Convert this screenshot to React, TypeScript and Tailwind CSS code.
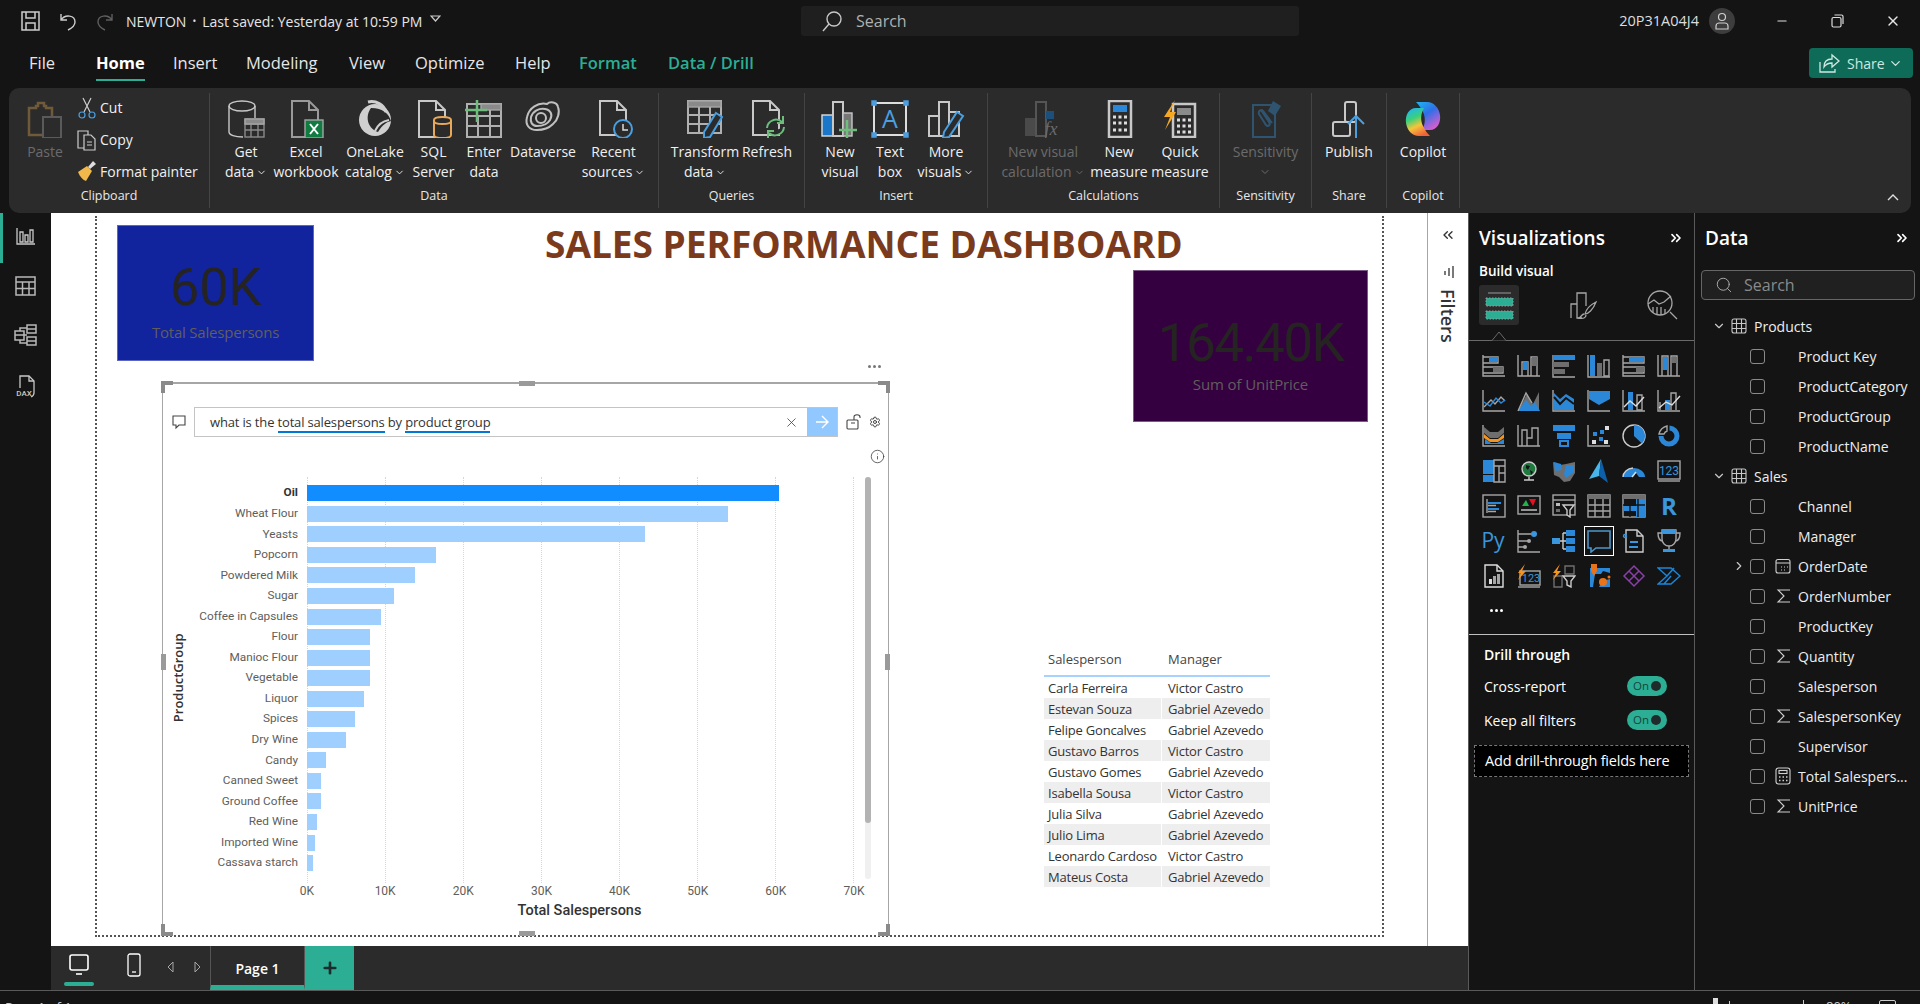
import type { ReactNode } from "react";
import { ChevronDown, ChevronRight, ChevronsLeft, ChevronsRight, Search, X, Info, Settings, Plus, Minus } from "lucide-react";

const G = "#a6a6a6";
const B = "#2b88d8";
const D = "#6e6e6e";
const O = "#f7941d";

const TABS = [
  { name: "File", w: "w-[67px]", cls: "text-[#e6e6e6]" },
  { name: "Home", w: "w-[77px]", cls: "text-white font-bold" },
  { name: "Insert", w: "w-[73px]", cls: "text-[#e6e6e6]" },
  { name: "Modeling", w: "w-[103px]", cls: "text-[#e6e6e6]" },
  { name: "View", w: "w-[66px]", cls: "text-[#e6e6e6]" },
  { name: "Optimize", w: "w-[100px]", cls: "text-[#e6e6e6]" },
  { name: "Help", w: "w-[64px]", cls: "text-[#e6e6e6]" },
  { name: "Format", w: "w-[89px]", cls: "text-[#2bae94] font-semibold" },
  { name: "Data / Drill", w: "w-[100px]", cls: "text-[#2bae94] font-semibold" },
];

const BARS = [
  { name: "Oil", w: 472 },
  { name: "Wheat Flour", w: 421 },
  { name: "Yeasts", w: 338 },
  { name: "Popcorn", w: 129 },
  { name: "Powdered Milk", w: 108 },
  { name: "Sugar", w: 87 },
  { name: "Coffee in Capsules", w: 74 },
  { name: "Flour", w: 63 },
  { name: "Manioc Flour", w: 63 },
  { name: "Vegetable", w: 63 },
  { name: "Liquor", w: 57 },
  { name: "Spices", w: 48 },
  { name: "Dry Wine", w: 39 },
  { name: "Candy", w: 19 },
  { name: "Canned Sweet", w: 14 },
  { name: "Ground Coffee", w: 14 },
  { name: "Red Wine", w: 10 },
  { name: "Imported Wine", w: 8 },
  { name: "Cassava starch", w: 6 },
];

const TABLE_ROWS = [
  ["Carla Ferreira", "Victor Castro"],
  ["Estevan Souza", "Gabriel Azevedo"],
  ["Felipe Goncalves", "Gabriel Azevedo"],
  ["Gustavo Barros", "Victor Castro"],
  ["Gustavo Gomes", "Gabriel Azevedo"],
  ["Isabella Sousa", "Victor Castro"],
  ["Julia Silva", "Gabriel Azevedo"],
  ["Julio Lima", "Gabriel Azevedo"],
  ["Leonardo Cardoso", "Victor Castro"],
  ["Mateus Costa", "Gabriel Azevedo"],
];

const FIELDS: { type: "table" | "field"; name: string; icon?: "sum" | "calc" | "date"; expand?: boolean }[] = [
  { type: "table", name: "Products" },
  { type: "field", name: "Product Key" },
  { type: "field", name: "ProductCategory" },
  { type: "field", name: "ProductGroup" },
  { type: "field", name: "ProductName" },
  { type: "table", name: "Sales" },
  { type: "field", name: "Channel" },
  { type: "field", name: "Manager" },
  { type: "field", name: "OrderDate", icon: "date", expand: true },
  { type: "field", name: "OrderNumber", icon: "sum" },
  { type: "field", name: "ProductKey" },
  { type: "field", name: "Quantity", icon: "sum" },
  { type: "field", name: "Salesperson" },
  { type: "field", name: "SalespersonKey", icon: "sum" },
  { type: "field", name: "Supervisor" },
  { type: "field", name: "Total Salespers...", icon: "calc" },
  { type: "field", name: "UnitPrice", icon: "sum" },
];

function Ico({ s = 24, vb = 24, children }: { s?: number; vb?: number; children: ReactNode }) {
  return (
    <svg width={s} height={s} viewBox={`0 0 ${vb} ${vb}`} fill="none" stroke={G} strokeWidth={1.4}>
      {children}
    </svg>
  );
}

const AX = <path d="M1 1v21h22" />;
const fillB = { fill: B, stroke: "none" };
const fillD = { fill: D, stroke: "none" };

const VIZ: ReactNode[] = [
  <>{AX}<path d="M1 3h15v6H1M1 13h20v6H1" /><rect x="7" y="3" width="9" height="5" {...fillB} /><rect x="11" y="13" width="10" height="5" {...fillD} /></>,
  <>{AX}<path d="M5 22V8h6v14M14 22V3h6v19" /><rect x="6" y="8" width="5" height="8" {...fillB} /><rect x="15" y="3" width="5" height="9" {...fillD} /></>,
  <><path d="M1 1v22h22" /><rect x="1" y="1" width="22" height="5" {...fillB} /><rect x="1" y="8" width="16" height="5" {...fillD} /><rect x="1" y="15" width="12" height="5" {...fillD} /></>,
  <><path d="M1 1v22h22" /><rect x="3" y="1" width="5" height="21" {...fillB} /><rect x="10" y="9" width="5" height="13" {...fillD} /><path d="M17 6h5v16h-5z" /></>,
  <>{AX}<path d="M1 3h21v6H1M1 13h21v6H1" /><rect x="7" y="3" width="15" height="5" {...fillB} /><rect x="14" y="13" width="8" height="5" {...fillD} /></>,
  <>{AX}<path d="M5 22V2h6v20M14 22V2h6v20" /><rect x="6" y="3" width="5" height="13" {...fillB} /><rect x="15" y="3" width="5" height="6" {...fillD} /></>,
  <>{AX}<path d="M2 18l7-7 4 4 6-7 4 4" /><path d="M2 13l6 4 6-8 5 5 4-3" stroke={B} /></>,
  <><path d="M1 22L10 5l6 10 6-12v19z" {...fillD} /><path d="M1 22L9 11l5 6 4-4 5 9z" {...fillB} /><path d="M1 22L9 4l6 10" /></>,
  <>{AX}<path d="M2 4l6 6 6-5 8 5v11H2z" {...fillB} /><path d="M2 8l6 7 6-6 8 6" stroke="#141414" strokeWidth={2} /></>,
  <>{AX}<path d="M2 2h21v8l-11 6-10-6z" {...fillB} /></>,
  <>{AX}<rect x="6" y="3" width="5" height="18" {...fillB} /><path d="M15 6h5v15h-5z" /><path d="M2 18l6-6 6 5 8-9" stroke="#dddddd" /></>,
  <>{AX}<rect x="8" y="11" width="5" height="10" {...fillB} /><path d="M3 21V13M14 21V4h5v17" /><path d="M2 19l7-6 6 3 8-9" stroke="#dddddd" /></>,
  <>{AX}<path d="M2 3l6 5h8l6-5v6l-6 5H8L2 9z" fill={D} stroke="none" /><path d="M2 10l6 5h8l6-5v4l-6 4H8l-6-4z" fill="#f7941d" stroke="none" /><path d="M3 15l6 4h6l7-4v5H3z" fill={B} stroke="none" /></>,
  <>{AX}<path d="M5 22V6h5v16M10 14h5V4h6v18" /></>,
  <><rect x="1" y="1" width="22" height="6" {...fillB} /><rect x="5" y="9" width="14" height="6" {...fillB} /><path d="M8 17h8v5H8z" stroke={B} strokeWidth={2} /></>,
  <>{AX}<rect x="13" y="6" width="4" height="4" {...fillB} /><rect x="6" y="8" width="4" height="4" {...fillB} /><rect x="12" y="13" width="4" height="4" {...fillB} /><rect x="18" y="2" width="4" height="4" fill="#dddddd" stroke="none" /><rect x="5" y="16" width="4" height="4" fill="#dddddd" stroke="none" /><rect x="17" y="16" width="4" height="4" fill="#dddddd" stroke="none" /></>,
  <><circle cx="12" cy="12" r="11" stroke="#cccccc" /><path d="M12 1a11 11 0 0 1 8 18.5L12 12z" {...fillB} /></>,
  <><path d="M1.500 12a10.500 10.500 0 1 0 21 0 10.500 10.500 0 0 0-10-10.500v5a5.500 5.500 0 1 1-6 5.500z" {...fillB} /><path d="M2 10a11 11 0 0 1 8-8v5a6 6 0 0 0-3 3z" stroke={G} /></>,
  <><rect x="1" y="1" width="11" height="14" {...fillB} /><rect x="1" y="16" width="11" height="7" {...fillB} /><path d="M12 1h11v22H12zM12 7h11M17 7v16M17 14h6" /></>,
  <><circle cx="12" cy="10" r="7" fill="#1f7a3f" stroke="#cccccc" /><path d="M9 6l4 1-2 4-2-2zM13 11l3 2-2 3z" fill="#141414" stroke="none" /><path d="M7 21h10M12 18v3" stroke="#cccccc" /></>,
  <><path d="M1 3l7 3 6-1 9-2v11l-5 8-6 1-5-5-5-2z" fill={D} stroke="none" /><path d="M2 3l7 2 1 6-7 1zM14 6h8v7l-8 6-2-4z" {...fillB} /></>,
  <><path d="M14 0L2 20l10-3z" fill="#49b6ea" stroke="none" /><path d="M14 0l7 24-9-7z" fill="#0c5fa8" stroke="none" /></>,
  <><path d="M1 18a11 9 0 0 1 22 0h-6l-3-4-3 4z" {...fillB} /><path d="M1 18a11 9 0 0 1 10-9" stroke="#d0d0d0" /><path d="M10 18l4-5" stroke="#ddd" /></>,
  <><rect x="1" y="2" width="22" height="18" /><path d="M1 22h22" /><text x="12" y="16" textAnchor="middle" fontSize="12" fill="#3a96dd" stroke="none" fontFamily="Roboto, sans-serif">123</text></>,
  <><rect x="1" y="1" width="22" height="22" /><path d="M5 5v14" /><path d="M6 8h13v2H6zM6 14h11v2H6z" fill={B} stroke="none" /><path d="M6 11.500h8M6 17.500h8" /></>,
  <><rect x="1" y="2" width="22" height="18" /><path d="M5 12l4-6 3 6z" fill="#22b14c" stroke="none" /><path d="M12 5h7l-3 7z" fill="#e81123" stroke="none" /><path d="M4 16h16" stroke="#cccccc" /></>,
  <><rect x="1" y="1" width="22" height="20" /><path d="M1 6h22" /><rect x="4" y="9" width="4" height="3" fill="#bbb" stroke="none" /><rect x="4" y="15" width="4" height="3" {...fillD} /><path d="M11 11h11l-4 5v7l-3-2v-5z" fill="#141414" stroke="#cccccc" /></>,
  <><rect x="1" y="1" width="22" height="22" /><rect x="1" y="1" width="22" height="4" fill={D} stroke="none" /><path d="M1 11h22M1 17h22M8 5v18M16 5v18" /></>,
  <><rect x="1" y="1" width="22" height="22" /><rect x="1" y="1" width="22" height="4" fill={D} stroke="none" /><rect x="14" y="5" width="9" height="18" {...fillB} /><rect x="1" y="12" width="22" height="5" {...fillB} /><path d="M1 11h22M8 5v18M16 5v18" stroke="#141414" /></>,
  <text x="12" y="21" textAnchor="middle" fontSize="24" fontWeight="700" fill="#3a96dd" stroke="none" fontFamily="Open Sans, sans-serif">R</text>,
  <text x="11" y="19" textAnchor="middle" fontSize="21" fill="#3a96dd" stroke="none" fontFamily="Open Sans, sans-serif">Py</text>,
  <><path d="M1 1v22h22" /><path d="M1 5h14M1 12h10M1 18h6" /><circle cx="17" cy="5" r="3" fill="#3a96dd" stroke="none" /><circle cx="12" cy="12" r="2" fill={G} stroke="none" /><circle cx="8" cy="18" r="2" fill={G} stroke="none" /></>,
  <><rect x="0" y="9" width="8" height="6" fill="#3a96dd" stroke="none" /><path d="M8 12h3M11 4v16M11 4h3M11 12h3M11 20h3" stroke="#cccccc" /><rect x="14" y="1" width="9" height="6" {...fillB} /><rect x="14" y="9" width="9" height="6" {...fillB} /><rect x="14" y="17" width="9" height="6" {...fillB} /></>,
  <path d="M1 2h22v17H9l-5 4v-4H1z" stroke="#4d94c8" strokeWidth={1.6} />,
  <><path d="M4 1h11l6 6v16H4z" stroke="#cccccc" /><path d="M15 1v6h6" stroke="#cccccc" /><circle cx="3" cy="7" r="1.500" stroke="#3a96dd" /><path d="M8 13h8M7 18h9" stroke="#3a96dd" strokeWidth={1.8} /></>,
  <><path d="M5 1h14v9a7 7 0 0 1-14 0z" stroke={G} /><rect x="5" y="1" width="14" height="4" fill="#3a96dd" stroke="none" /><path d="M5 4H1c0 6 2 8 5 8M19 4h4c0 6-2 8-5 8M12 17v3" stroke={G} /><rect x="6" y="20" width="12" height="3" fill="#3a96dd" stroke="none" /></>,
  <><path d="M3 1h12l6 6v16H3z" stroke="#dddddd" /><path d="M15 1v6h6" stroke="#dddddd" /><rect x="7" y="15" width="3" height="5" fill="#dddddd" stroke="none" /><rect x="11" y="12" width="3" height="8" fill={G} stroke="none" /><rect x="15" y="10" width="3" height="10" fill={G} stroke="none" /></>,
  <><rect x="3" y="7" width="20" height="14" /><path d="M1 23h22" /><text x="14" y="18" textAnchor="middle" fontSize="11" fill="#3a96dd" stroke="none" fontFamily="Roboto, sans-serif">123</text><path d="M8 0L1 9h3l-3 7 8-9H5z" fill={O} stroke="none" /></>,
  <><path d="M2 12h8v11H2zM13 2h9v8h-9z" stroke={D} /><path d="M11 12h12l-4 5v6l-4-2v-4z" fill="#141414" stroke="#cccccc" /><path d="M8 0L1 9h3l-3 7 8-9H5z" fill={O} stroke="none" /></>,
  <><path d="M3 4h20v19H3z" {...fillB} /><path d="M8 10h6l2-3 7 2v6l-8 2-3 6H6z" fill="#141414" stroke="none" /><path d="M4 0h6v7l-3 5-3-5z" fill="#e8731a" stroke="none" /><circle cx="16" cy="18" r="4" fill="#e8731a" stroke="none" /><circle cx="22" cy="13" r="1.500" fill="#e8731a" stroke="none" /></>,
  <path d="M12 2l10 10-10 10L2 12zM7 7l10 10M17 7L7 17" stroke="#8a3fa8" strokeWidth={1.5} />,
  <path d="M1 4h13l9 8-9 8H1l9-8zM10 12l7-8M7 20l7-8" stroke="#1a86d9" strokeWidth={1.5} />,
];

// ribbon icons are drawn on a 38 grid
const RIB: Record<string, ReactNode> = {
  paste: <><path d="M3 8h7v-2h2v-3h6v3h2v2h6v27H3z" stroke="#6f5a3a" strokeWidth={2.5} /><rect x="17" y="17" width="18" height="21" fill="#2b2b2b" stroke="#5a5a5a" strokeWidth={2} /></>,
  getdata: <><ellipse cx="15" cy="6" rx="13" ry="5" stroke="#c8c8c8" /><path d="M2 6v26c0 3 6 5 14 5M28 6v12" stroke="#c8c8c8" /><rect x="18" y="19" width="19" height="18" fill="#2b2b2b" stroke="#8a8a8a" /><path d="M18 24h19M18 30h19M24 24v13M31 24v13" stroke="#8a8a8a" /><rect x="18" y="19" width="19" height="5" fill="#8a8a8a" /></>,
  excel: <><path d="M5 1h17l9 9v27H5z" stroke="#9a9a9a" strokeWidth={2} /><path d="M22 1v9h9" stroke="#9a9a9a" strokeWidth={2} /><rect x="18" y="20" width="18" height="18" fill="#107c41" /><path d="M23 24l8 10M31 24l-8 10" stroke="#ffffff" strokeWidth={2} /></>,
  onelake: <><circle cx="19" cy="20" r="16" fill="#cfcfcf" stroke="none" /><path d="M15 8c-6 8-4 20 7 24 5-8 9-10 13-11-2-7-8-13-20-13z" fill="#2b2b2b" stroke="none" /><path d="M12 2c8-2 16 3 18 10" stroke="#cfcfcf" strokeWidth={3} /><path d="M19 31c3-7 8-10 14-11" stroke="#cfcfcf" strokeWidth={2} /></>,
  sql: <><path d="M4 1h17l9 9v27H4z" stroke="#c8c8c8" strokeWidth={2} /><path d="M21 1v9h9" stroke="#c8c8c8" strokeWidth={2} /><path d="M19 20c0-4 17-4 17 0v15c0 4-17 4-17 0z" fill="#2b2b2b" stroke="#e8a85a" strokeWidth={2} /><path d="M19 21c0 4 17 4 17 0" stroke="#e8a85a" strokeWidth={2} /></>,
  enter: <><rect x="2" y="4" width="34" height="33" stroke="#b0b0b0" strokeWidth={2} /><rect x="16" y="4" width="20" height="6" fill="#8a8a8a" /><path d="M2 16h34M2 26h34M13 16v21M25 10v27" stroke="#b0b0b0" strokeWidth={2} /><path d="M12 0v22M0 10h22" stroke="#6ebd7d" strokeWidth={2.500} /></>,
  dataverse: <><path d="M13 30c-8 0-12-5-10-13 2-9 11-15 20-13 3-3 10-2 11 3 2 5 0 13-5 17-5 5-11 6-16 6z" stroke="#c0c0c0" strokeWidth={2} /><path d="M13 26c-5 0-7-4-6-9 2-6 8-9 14-8 6 1 8 6 5 11-3 5-8 6-13 6z" stroke="#c0c0c0" strokeWidth={2} /><circle cx="17" cy="18" r="5" stroke="#c0c0c0" strokeWidth={2} /></>,
  recent: <><path d="M5 1h17l9 9v25H5z" stroke="#c8c8c8" strokeWidth={2} /><path d="M22 1v9h9" stroke="#c8c8c8" strokeWidth={2} /><circle cx="28" cy="29" r="9" fill="#2b2b2b" stroke="#4a9fe0" strokeWidth={2} /><path d="M28 24v6h5" stroke="#dddddd" strokeWidth={1.500} /></>,
  transform: <><rect x="2" y="1" width="33" height="32" stroke="#b0b0b0" strokeWidth={2} /><rect x="2" y="1" width="33" height="6" fill="#8a8a8a" /><path d="M2 15h33M2 24h33M13 7v26M24 7v26" stroke="#b0b0b0" strokeWidth={2} /><path d="M30 13l6 4-12 20-6 1 0-6z" fill="#2b2b2b" stroke="#4a9fe0" strokeWidth={2} /></>,
  refresh: <><path d="M5 1h17l9 9v25H5z" stroke="#c8c8c8" strokeWidth={2} /><path d="M22 1v9h9" stroke="#c8c8c8" strokeWidth={2} /><path d="M19 28a9 9 0 0 1 15-6M36 27a9 9 0 0 1-15 6" fill="#2b2b2b" stroke="#6ebd7d" strokeWidth={2} /><path d="M35 16v7h-6M20 38v-7h6" stroke="#6ebd7d" strokeWidth={2} /></>,
  newvisual: <><rect x="1" y="15" width="11" height="21" fill="#1a76c9" stroke="#ddd" /><rect x="12" y="2" width="10" height="34" stroke="#c8c8c8" strokeWidth={2} /><rect x="22" y="13" width="9" height="23" fill="#777" stroke="#c8c8c8" /><path d="M26 20v18M18 30h18" stroke="#6ebd7d" strokeWidth={2.500} /></>,
  textbox: <><rect x="3" y="3" width="32" height="32" stroke="#dddddd" strokeWidth={2} /><path d="M1 1h4v4H1zM33 1h4v4h-4zM1 33h4v4H1zM33 33h4v4h-4z" fill="#4a9fe0" stroke="#4a9fe0" /><text x="19" y="28" textAnchor="middle" fontSize="25" fill="#4a9fe0" stroke="none" fontFamily="Open Sans, sans-serif">A</text></>,
  morevisuals: <><rect x="2" y="16" width="10" height="20" stroke="#c8c8c8" strokeWidth={2} /><rect x="12" y="2" width="10" height="34" stroke="#c8c8c8" strokeWidth={2} /><rect x="22" y="12" width="10" height="24" stroke="#c8c8c8" strokeWidth={2} /><path d="M30 12l6 4-14 21-6 1 1-6z" fill="#2b2b2b" stroke="#4a9fe0" strokeWidth={2} /></>,
  calcvisual: <><rect x="1" y="18" width="11" height="18" fill="#4a4a4a" stroke="none" /><rect x="12" y="2" width="10" height="34" stroke="#555" strokeWidth={2} /><rect x="22" y="11" width="8" height="8" fill="#1c4f7c" stroke="none" /><text x="27" y="35" textAnchor="middle" fontSize="18" fontStyle="italic" fill="#6a6a6a" stroke="none" fontFamily="Liberation Serif, serif">fx</text></>,
  measure: <><rect x="9" y="1" width="22" height="36" stroke="#c8c8c8" strokeWidth={2.500} /><rect x="13" y="5" width="14" height="7" fill="#2b88d8" stroke="none" /><path d="M13 17h3M18.500 17h3M24 17h3M13 23h3M18.500 23h3M24 23h3M13 30h3M18.500 30h3M24 30h3" stroke="#dddddd" strokeWidth={3} /></>,
  quick: <><rect x="12" y="4" width="22" height="33" stroke="#c8c8c8" strokeWidth={2.500} /><rect x="16" y="8" width="14" height="7" fill="#8a8a8a" stroke="none" /><path d="M16 20h3M21.500 20h3M27 20h3M16 26h3M21.500 26h3M27 26h3M16 32h3M21.500 32h3M27 32h3" stroke="#dddddd" strokeWidth={3} /><path d="M14 0L3 17h6L4 30 15 12H9z" fill="#f5a623" stroke="none" /></>,
  sensitivity: <><rect x="6" y="5" width="22" height="32" stroke="#2f5470" strokeWidth={2} /><path d="M14 10l8 12c2 3-1 5-3 3l-7-11c-1-3 2-5 4-3l9 12" stroke="#2f5470" strokeWidth={2} /><path d="M26 1l8 5-6 10-7-5z" fill="#2f5470" stroke="none" /></>,
  publish: <><rect x="15" y="2" width="11" height="20" rx="2" stroke="#c8c8c8" strokeWidth={2} /><rect x="3" y="22" width="17" height="14" rx="2" stroke="#c8c8c8" strokeWidth={2} /><path d="M26 38V17M18 24l8-8 8 8" stroke="#4a9fe0" strokeWidth={2} /></>,
  copilot: <><defs><linearGradient id="cpA" x1="0" y1="0" x2="0.6" y2="1"><stop offset="0" stopColor="#1fb6f2" /><stop offset="0.5" stopColor="#2f6fe8" /><stop offset="1" stopColor="#d05fd0" /></linearGradient><linearGradient id="cpB" x1="0.2" y1="0" x2="0.6" y2="1"><stop offset="0" stopColor="#1fb6f2" /><stop offset="0.35" stopColor="#3ad07a" /><stop offset="0.65" stopColor="#f5c53a" /><stop offset="1" stopColor="#f0623a" /></linearGradient></defs><path d="M12 2h11c7 0 12 6 13 13 1 8-3 15-10 15h-8c3-5 4-12 1-18-2-4-4-7-7-10z" fill="url(#cpA)" stroke="none" /><path d="M26 36H15C8 36 3 30 2 23 1 15 5 8 12 8h8c-3 5-4 12-1 18 2 4 4 7 7 10z" fill="url(#cpB)" stroke="none" /></>,
};

function RibbonButton({ icon, lines, caret, disabled, w }: { icon: string; lines: string[]; caret?: boolean; disabled?: boolean; w: string }) {
  return (
    <div className={`flex shrink-0 flex-col items-center ${w}`}>
      <Ico s={38} vb={38}>{RIB[icon]}</Ico>
      <div className={`mt-[4px] flex flex-col items-center text-[14px] leading-[20px] whitespace-nowrap ${disabled ? "text-[#6b6b6b]" : "text-[#f0f0f0]"}`}>
        {lines.map((l, i) => (
          <span key={l} className="flex items-center gap-[2px]">
            {l}
            {caret && i === lines.length - 1 && <ChevronDown size={11} />}
          </span>
        ))}
      </div>
    </div>
  );
}

function RibbonGroup({ w, pl, label, children }: { w: string; pl?: string; label: string; children: ReactNode }) {
  return (
    <div className={`my-[5px] flex shrink-0 flex-col border-r border-[#444444] ${w}`}>
      <div className={`flex h-[94px] pt-[7px] ${pl ?? ""}`}>{children}</div>
      <div className="h-[20px] text-center text-[12.5px] leading-[18px] text-[#e8e8e8]">{label}</div>
    </div>
  );
}

function Ribbon() {
  return (
    <div className="relative ml-[9px] flex h-[125px] w-[1902px] rounded-[10px] bg-[#2b2b2b]">
      <RibbonGroup w="w-[201px]" pl="pl-[6px]" label="Clipboard">
        <RibbonButton icon="paste" lines={["Paste"]} disabled w="w-[60px]" />
        <div className="-mt-[8px] flex flex-col text-[14px] text-[#f0f0f0]">
          <div className="flex h-[33px] items-center">
            <svg width="24" height="24" viewBox="0 0 24 24" fill="none" stroke="#cccccc" strokeWidth={1.2}><path d="M8 2l7 14M16 2L9 16" /><circle cx="7" cy="19" r="3" stroke="#4a9fe0" /><circle cx="17" cy="19" r="3" stroke="#4a9fe0" /></svg>
            <span className="ml-[1px]">Cut</span>
          </div>
          <div className="flex h-[33px] items-center">
            <svg width="24" height="24" viewBox="0 0 24 24" fill="none" stroke="#cccccc" strokeWidth={1.2}><path d="M3 3h10v17H3z" /><path d="M9 7h7l4 4v11H9z" fill="#2b2b2b" /><path d="M12 14h5M12 17h5" /></svg>
            <span className="ml-[1px]">Copy</span>
          </div>
          <div className="flex h-[32px] items-center">
            <svg width="24" height="24" viewBox="0 0 24 24" fill="none"><path d="M13 8l5-6 3 3-6 5z" fill="#dddddd" /><path d="M3 13l9-6 5 5-6 10c-3-1-6-4-8-9z" fill="#f2b84b" /></svg>
            <span className="ml-[1px] whitespace-nowrap">Format painter</span>
          </div>
        </div>
      </RibbonGroup>
      <RibbonGroup w="w-[449px]" pl="pl-[6px]" label="Data">
        <RibbonButton icon="getdata" lines={["Get", "data"]} caret w="w-[60px]" />
        <RibbonButton icon="excel" lines={["Excel", "workbook"]} w="w-[60px]" />
        <RibbonButton icon="onelake" lines={["OneLake", "catalog"]} caret w="w-[78px]" />
        <RibbonButton icon="sql" lines={["SQL", "Server"]} w="w-[39px]" />
        <RibbonButton icon="enter" lines={["Enter", "data"]} w="w-[62px]" />
        <RibbonButton icon="dataverse" lines={["Dataverse"]} w="w-[56px]" />
        <RibbonButton icon="recent" lines={["Recent", "sources"]} caret w="w-[85px]" />
      </RibbonGroup>
      <RibbonGroup w="w-[146px]" pl="pl-[7px]" label="Queries">
        <RibbonButton icon="transform" lines={["Transform", "data"]} caret w="w-[78px]" />
        <RibbonButton icon="refresh" lines={["Refresh"]} w="w-[46px]" />
      </RibbonGroup>
      <RibbonGroup w="w-[183px]" pl="pl-[7px]" label="Insert">
        <RibbonButton icon="newvisual" lines={["New", "visual"]} w="w-[56px]" />
        <RibbonButton icon="textbox" lines={["Text", "box"]} w="w-[44px]" />
        <RibbonButton icon="morevisuals" lines={["More", "visuals"]} caret w="w-[68px]" />
      </RibbonGroup>
      <RibbonGroup w="w-[232px]" pl="pl-[4px]" label="Calculations">
        <RibbonButton icon="calcvisual" lines={["New visual", "calculation"]} caret disabled w="w-[102px]" />
        <RibbonButton icon="measure" lines={["New", "measure"]} w="w-[50px]" />
        <RibbonButton icon="quick" lines={["Quick", "measure"]} w="w-[72px]" />
      </RibbonGroup>
      <RibbonGroup w="w-[92px]" label="Sensitivity">
        <div className="flex w-full shrink-0 flex-col items-center">
          <Ico s={38} vb={38}>{RIB.sensitivity}</Ico>
          <div className="mt-[4px] flex flex-col items-center text-[14px] leading-[20px] text-[#6b6b6b]">
            <span>Sensitivity</span>
            <ChevronDown size={12} className="mt-[4px]" />
          </div>
        </div>
      </RibbonGroup>
      <RibbonGroup w="w-[75px]" label="Share">
        <RibbonButton icon="publish" lines={["Publish"]} w="w-full" />
      </RibbonGroup>
      <RibbonGroup w="w-[73px]" label="Copilot">
        <RibbonButton icon="copilot" lines={["Copilot"]} w="w-full" />
      </RibbonGroup>
      <svg className="absolute right-[12px] bottom-[12px]" width="12" height="8" viewBox="0 0 12 8" fill="none" stroke="#e0e0e0" strokeWidth={1.4}><path d="M1 7l5-5 5 5" /></svg>
    </div>
  );
}

function TitleBar() {
  return (
    <div className="relative flex h-[42px] items-center text-[14px] text-[#e6e6e6]">
      <svg className="ml-[21px]" width="19" height="20" viewBox="0 0 19 20" fill="none" stroke="#cccccc" strokeWidth={1.500}><path d="M1 1h17v18H1zM5 1v6h9V1M5 19v-7h9v7" /></svg>
      <svg className="ml-[19px]" width="18" height="20" viewBox="0 0 18 20" fill="none" stroke="#cccccc" strokeWidth={1.400}><path d="M2 3v6h6M2 9c4-6 14-5 14 2 0 4-3 6-7 8" /></svg>
      <svg className="ml-[19px]" width="18" height="20" viewBox="0 0 18 20" fill="none" stroke="#5e5e5e" strokeWidth={1.400}><path d="M16 3v6h-6M16 9C12 3 2 4 2 11c0 4 3 6 7 8" /></svg>
      <span className="ml-[12px] whitespace-nowrap">NEWTON</span>
      <span className="mx-[6px] text-[10px]">•</span>
      <span className="whitespace-nowrap">Last saved: Yesterday at 10:59 PM</span>
      <svg className="mb-[6px] ml-[8px]" width="11" height="7" viewBox="0 0 11 7" fill="none" stroke="#cccccc" strokeWidth={1.200}><path d="M1 1h9L5.500 6z" /></svg>
      <div className="absolute top-[6px] left-[801px] flex h-[30px] w-[498px] items-center rounded-[3px] bg-[#1f1f1f] pl-[20px] text-[16px] text-[#b0b0b0]">
        <svg width="22" height="22" viewBox="0 0 22 22" fill="none" stroke="#c8c8c8" strokeWidth={1.400}><circle cx="13" cy="9" r="7" /><path d="M8 14l-6 7" /></svg>
        <span className="ml-[13px]">Search</span>
      </div>
      <div className="absolute top-0 right-0 flex h-[42px] items-center">
        <span className="text-[14.5px] text-[#dddddd]">20P31A04J4</span>
        <div className="ml-[10px] flex h-[26px] w-[26px] items-center justify-center rounded-full bg-[#3d3d3d]">
          <svg width="14" height="18" viewBox="0 0 14 18" fill="none" stroke="#d0d0d0" strokeWidth={1.200}><circle cx="7" cy="5" r="3.500" /><path d="M1 17v-3c0-2 2-3 3-3h6c1 0 3 1 3 3v3z" /></svg>
        </div>
        <Minus size={14} color="#dddddd" className="ml-[40px]" />
        <svg className="ml-[42px]" width="13" height="14" viewBox="0 0 13 14" fill="none" stroke="#dddddd" strokeWidth={1.200}><rect x="1" y="3.500" width="9" height="9.500" rx="1.500" /><path d="M3.500 1h7c1 0 1.500.5 1.500 1.500V10" /></svg>
        <X size={16} color="#e6e6e6" className="mr-[19px] ml-[41px]" />
      </div>
    </div>
  );
}

function TabsRow() {
  return (
    <div className="relative flex h-[46px] pl-[29px] text-[16.5px]">
      {TABS.map((t) => (
        <div key={t.name} className={`${t.w} shrink-0 pt-[9px]`}>
          <span className={`relative inline-block leading-[24px] whitespace-nowrap ${t.cls}`}>
            {t.name}
            {t.name === "Home" && <span className="absolute top-[28px] right-0 left-0 h-[2px] bg-[#2bae94]" />}
          </span>
        </div>
      ))}
      <div className="absolute top-[6px] left-[1809px] flex h-[30px] w-[104px] items-center rounded-[4px] bg-[#0e6b58] pl-[9px] text-[14px] text-[#cfe8e2]">
        <svg width="22" height="22" viewBox="0 0 22 22" fill="none" stroke="#cfe8e2" strokeWidth={1.300}><path d="M2 10v10h15v-3" /><path d="M6 15c0-6 4-8 8-8V3l7 6-7 6v-4c-3 0-6 1-8 4z" /></svg>
        <span className="ml-[7px]">Share</span>
        <ChevronDown size={15} className="ml-[3px]" />
      </div>
    </div>
  );
}

function Rail() {
  return (
    <div className="relative flex w-[51px] shrink-0 flex-col items-center bg-[#141414] pt-[14px]">
      <div className="absolute top-0 left-0 h-[50px] w-[3px] bg-[#2bae94]" />
      <svg width="20" height="20" viewBox="0 0 20 20" fill="none" stroke="#c8c8c8" strokeWidth={1.300}><path d="M1 1v16h18" /><path d="M4 5h3v10H4zM9 8h3v7H9zM14 3h3v12h-3z" /></svg>
      <svg className="mt-[29px]" width="21" height="20" viewBox="0 0 21 20" fill="none" stroke="#b8b8b8" strokeWidth={1.500}><rect x="1" y="1" width="19" height="18" /><path d="M1 6h19M1 12.500h19M7.500 6v13M14 6v13" /></svg>
      <svg className="mt-[27px]" width="24" height="24" viewBox="0 0 24 24" fill="none" stroke="#b8b8b8" strokeWidth={1.500}><path d="M1 8h9v9H1zM13 2h9v8h-9zM13 14h9v8h-9zM1 12h9M13 6h9M13 18h9M10 12h3M6 17v3h7M6 8V5h7" /></svg>
      <svg className="mt-[27px]" width="24" height="24" viewBox="0 0 24 24" fill="none" stroke="#c8c8c8" strokeWidth={1.300}><path d="M6 14V2h9l5 5v12c0 1-1 3-3 4" /><path d="M15 2v5h5" /><text x="10" y="22" textAnchor="middle" fontSize="8" fontWeight="500" fill="#c8c8c8" stroke="none" fontFamily="Roboto, sans-serif">DAX</text></svg>
    </div>
  );
}

function Handles() {
  const c = "absolute w-[12px] h-[12px] border-[#8a8a8a]";
  const m = "absolute bg-[#9a9a9a]";
  return (
    <>
      <div className={`${c} -top-[3px] -left-[2px] border-t-[4px] border-l-[4px]`} />
      <div className={`${c} -top-[3px] -right-[2px] border-t-[4px] border-r-[4px]`} />
      <div className={`${c} -bottom-[1px] -left-[2px] border-b-[4px] border-l-[4px]`} />
      <div className={`${c} -right-[2px] -bottom-[1px] border-r-[4px] border-b-[4px]`} />
      <div className={`${m} -top-[3px] left-[356px] h-[5px] w-[16px]`} />
      <div className={`${m} -bottom-[1px] left-[356px] h-[5px] w-[16px]`} />
      <div className={`${m} top-[270px] -left-[2px] h-[16px] w-[5px]`} />
      <div className={`${m} top-[270px] -right-[2px] h-[16px] w-[5px]`} />
    </>
  );
}

function QnA() {
  return (
    <div className="absolute top-[169px] left-[111px] flex h-[553px] w-[727px] flex-col border-x border-t-2 border-[#a6a6a6] font-['Roboto',sans-serif]">
      <Handles />
      <div className="absolute -top-[19px] right-[7px] flex gap-[2px]">
        <span className="h-[3px] w-[3px] rounded-full bg-[#777]" />
        <span className="h-[3px] w-[3px] rounded-full bg-[#777]" />
        <span className="h-[3px] w-[3px] rounded-full bg-[#777]" />
      </div>
      <div className="mt-[23px] flex h-[30px] items-center pl-[8px]">
        <svg width="16" height="16" viewBox="0 0 16 16" fill="none" stroke="#444" strokeWidth={1.100}><path d="M2 2h12v9H8l-3 3v-3H2z" /></svg>
        <div className="ml-[7px] flex h-[30px] w-[644px] items-center justify-between border border-[#c4c4c4] pl-[15px] font-['Open_Sans',sans-serif] text-[13px] tracking-[-0.16px] text-[#333]">
          <span className="pt-[2px] whitespace-nowrap">
            what is the <span className="border-b-2 border-[#0078d4]">total salespersons</span> by <span className="border-b-2 border-[#0078d4]">product group</span>
          </span>
          <div className="flex items-center">
            <X size={15} strokeWidth={1.3} color="#444" className="mr-[8px]" />
            <div className="flex h-[28px] w-[30px] items-center justify-center bg-[#91c8ff]">
              <svg width="16" height="14" viewBox="0 0 16 14" fill="none" stroke="#ffffff" strokeWidth={1.400}><path d="M2 7h12M8 1l6 6-6 6" /></svg>
            </div>
          </div>
        </div>
        <svg className="ml-[8px]" width="16" height="16" viewBox="0 0 16 16" fill="none" stroke="#444" strokeWidth={1.100}><rect x="1" y="6" width="11" height="9" rx="1" /><path d="M8 6V3c0-3 6-3 6 0v1M5 9h4" /></svg>
        <Settings size={12} color="#444" className="ml-[7px]" />
      </div>
      <Info size={15} strokeWidth={1.300} color="#444" className="absolute top-[65px] left-[707px]" />

      <div className="relative mt-[40px] h-[406px]">
        <div className="absolute top-0 left-[144px] flex h-full w-[547px] justify-between">
          {[0, 1, 2, 3, 4, 5, 6, 7].map((i) => (
            <div key={i} className="h-full border-l border-dotted border-[#d6d6d6]" />
          ))}
        </div>
        <div className="relative flex flex-col pt-[6px]">
          {BARS.map((b, i) => (
            <div key={b.name} className="flex h-[20.55px] items-center">
              <span className={`w-[135px] shrink-0 text-right text-[11.8px] whitespace-nowrap ${i === 0 ? "font-bold text-[#333]" : "text-[#605e5c]"}`}>{b.name}</span>
              <div
                className={`ml-[9px] h-[16px] ${i === 0 ? "bg-[#118dff]" : "bg-[#9fcfff]"}`}
                style={{ width: b.w }}
              />
            </div>
          ))}
        </div>
        <div className="absolute top-0 left-[702px] flex h-[402px] w-[6px] flex-col rounded-[3px] bg-[#f0f0f0]">
          <div className="h-[346px] rounded-[3px] bg-[#b3b3b3]" />
        </div>
        <span className="absolute top-[191px] -left-[34px] w-[100px] -rotate-90 text-center font-['Open_Sans',sans-serif] text-[13px] font-semibold whitespace-nowrap text-[#333]">ProductGroup</span>
      </div>
      <div className="mt-[1px] ml-[144px] flex w-[547px] justify-between text-[12px] leading-[14px] text-[#605e5c]">
        {["0K", "10K", "20K", "30K", "40K", "50K", "60K", "70K"].map((t) => (
          <div key={t} className="flex w-0 justify-center">
            <span>{t}</span>
          </div>
        ))}
      </div>
      <div className="mt-[4px] ml-[143px] w-[547px] text-center text-[14.5px] leading-[18px] font-medium text-[#333]">Total Salespersons</div>
    </div>
  );
}

function SalesTable() {
  return (
    <div className="absolute top-[436px] left-[993px] w-[226px] font-['Open_Sans',sans-serif] text-[13px] leading-[21px] text-[#333]">
      <div className="flex h-[28px] items-start border-b-2 border-[#a6d2ff]">
        <span className="w-[118px] pl-[4px] text-[#444]">Salesperson</span>
        <span className="pl-[6px] text-[#444]">Manager</span>
      </div>
      {TABLE_ROWS.map((r, i) => (
        <div key={r[0]} className={`flex h-[21px] ${i % 2 === 1 ? "bg-[#eeeeee]" : ""}`}>
          <span className="w-[118px] border-r border-white pt-[1px] pl-[4px] whitespace-nowrap tracking-[-0.2px]">{r[0]}</span>
          <span className="pt-[1px] pl-[6px] whitespace-nowrap tracking-[-0.2px]">{r[1]}</span>
        </div>
      ))}
    </div>
  );
}

function Canvas() {
  return (
    <div className="relative w-[1376px] shrink-0 bg-white">
      <div className="absolute top-[3px] left-[44px] h-[721px] w-[1289px] border-x-2 border-b-2 border-dotted border-[#555]" />
      <div className="absolute top-[12px] left-[66px] flex h-[136px] w-[197px] flex-col items-center border border-[#5a66c0] bg-[#12239e] pt-[36px]">
        <span className="font-['Roboto',sans-serif] text-[52px] leading-[52px] text-[#252423]">60K</span>
        <span className="mt-[8px] text-[15px] leading-[20px] tracking-[-0.2px] text-[#605e5c]">Total Salespersons</span>
      </div>
      <div className="absolute top-[6px] left-[494px] text-[37px] leading-[50px] font-bold whitespace-nowrap text-[#7b3a1c]">SALES PERFORMANCE DASHBOARD</div>
      <div className="absolute top-[57px] left-[1082px] flex h-[152px] w-[235px] flex-col items-center border border-[#7b5a85] bg-[#350040] pt-[44px]">
        <span className="font-['Roboto',sans-serif] text-[53px] leading-[56px] tracking-[-1.5px] text-[#252423]">164.40K</span>
        <span className="mt-[3px] text-[15px] leading-[20px] tracking-[-0.1px] text-[#605e5c]">Sum of UnitPrice</span>
      </div>
      <QnA />
      <SalesTable />
    </div>
  );
}

function FilterPane() {
  return (
    <div className="flex w-[41px] shrink-0 flex-col items-center border-l border-[#a6a6a6] bg-white pt-[14px] text-[#333]">
      <ChevronsLeft size={16} />
      <svg className="mt-[22px]" width="12" height="14" viewBox="0 0 12 14" fill="none" stroke="#333" strokeWidth={1.300}><path d="M11 1v12M7 3v8M3 6v4" /></svg>
      <span className="mt-[10px] text-[18px] leading-[24px] font-semibold [writing-mode:vertical-rl]">Filters</span>
    </div>
  );
}

function PageBar() {
  return (
    <div className="flex h-[44px] bg-[#2b2b2b] text-white">
      <div className="relative flex w-[56px] shrink-0 items-start justify-center pt-[8px]">
        <svg width="20" height="22" viewBox="0 0 20 22" fill="none" stroke="#ffffff" strokeWidth={1.600}><rect x="1" y="1" width="18" height="15" rx="2" /><path d="M7 20h6" /></svg>
        <div className="absolute top-[36px] left-[13px] h-[4px] w-[30px] rounded-full bg-[#2bae94]" />
      </div>
      <div className="flex w-[54px] shrink-0 justify-center pt-[7px]">
        <svg width="14" height="24" viewBox="0 0 14 24" fill="none" stroke="#ffffff" strokeWidth={1.300}><rect x="1" y="1" width="12" height="22" rx="2" /><path d="M5 19h4" /></svg>
      </div>
      <div className="flex w-[49px] shrink-0 items-start pt-[15px] pl-[6px]">
        <svg width="7" height="12" viewBox="0 0 7 12" fill="none" stroke="#a6a6a6"><path d="M6 1L1 6l5 5z" /></svg>
        <svg className="ml-[20px]" width="7" height="12" viewBox="0 0 7 12" fill="none" stroke="#a6a6a6"><path d="M1 1l5 5-5 5z" /></svg>
      </div>
      <div className="flex w-[95px] shrink-0 items-start justify-center border-x border-[#555] border-b-[5px] border-b-[#2bae94] pt-[14px] text-[14px] leading-[18px] font-semibold">Page 1</div>
      <div className="flex w-[49px] shrink-0 items-center justify-center bg-[#2bae94]">
        <Plus size={18} strokeWidth={3.500} color="#1c2b2b" />
      </div>
    </div>
  );
}

function VizPane() {
  return (
    <div className="flex w-[227px] shrink-0 flex-col border-x border-[#5a5a5a] bg-[#141414] text-white">
      <div className="mt-[12px] flex h-[26px] items-center justify-between pr-[10px] pl-[10px] text-[19px] leading-[26px] font-semibold">
        <span>Visualizations</span>
        <ChevronsRight size={16} strokeWidth={2.500} />
      </div>
      <div className="mt-[10px] h-[20px] pl-[10px] text-[13.5px] leading-[20px] font-semibold">Build visual</div>
      <div className="relative mt-[4px] flex h-[40px] items-center pl-[10px]">
        <div className="flex h-[40px] w-[40px] items-center justify-center rounded-[3px] bg-[#2b2b2b]">
          <svg width="30" height="30" viewBox="0 0 30 30" fill="none" stroke="#9a9a9a"><path d="M4 3h23" /><rect x="2" y="8" width="27" height="8" fill="#2bae94" strokeDasharray="1.500 1.500" /><rect x="2" y="21" width="27" height="8" fill="#2bae94" strokeDasharray="1.500 1.500" /></svg>
        </div>
        <svg className="ml-[50px]" width="30" height="30" viewBox="0 0 30 30" fill="none" stroke="#a6a6a6" strokeWidth={1.300}><path d="M2 28V14h6V3h9v13M8 14v14h5" /><path d="M27 12c-6 3-10 8-11 12 3 0 8-4 11-12zM15 24c-2 0-3 3-5 4 4 1 7 0 7-3" /></svg>
        <svg className="ml-[47px]" width="32" height="32" viewBox="0 0 32 32" fill="none" stroke="#a6a6a6" strokeWidth={1.300}><circle cx="14" cy="14" r="12" /><path d="M2 15l6-4 5 4 5-2 7-6M7 24v-6M11 26v-8M15 26v-8M19 25v-5M24 23l7 7" /></svg>
      </div>
      <div className="relative mt-[15px] h-px bg-[#6a6a6a]">
        <svg className="absolute -top-[9px] left-[19px]" width="22" height="10" viewBox="0 0 22 10" fill="#141414" stroke="#6a6a6a"><path d="M1 9.500h3L11 1l7 8.500h3" /></svg>
      </div>
      <div className="mt-[7px] grid grid-cols-[repeat(6,35px)] pl-[7px]">
        {VIZ.map((icon, i) => (
          <div key={i} className="flex h-[35px] w-[35px] items-center justify-center">
            <div className={`flex h-[30px] w-[30px] items-center justify-center ${i === 33 ? "border border-white" : ""}`}>
              <Ico>{icon}</Ico>
            </div>
          </div>
        ))}
      </div>
      <div className="flex h-[35px] items-center gap-[2px] pl-[21px]">
        <span className="h-[3px] w-[3px] rounded-full bg-white" />
        <span className="h-[3px] w-[3px] rounded-full bg-white" />
        <span className="h-[3px] w-[3px] rounded-full bg-white" />
      </div>
      <div className="mt-[6px] h-px bg-[#c0c0c0]" />
      <div className="mt-[10px] h-[20px] pl-[15px] text-[14px] leading-[20px] font-semibold">Drill through</div>
      <div className="mt-[11px] flex h-[20px] items-center justify-between pr-[27px] pl-[15px] text-[14px]">
        <span>Cross-report</span>
        <Toggle />
      </div>
      <div className="mt-[14px] flex h-[20px] items-center justify-between pr-[27px] pl-[15px] text-[14px]">
        <span>Keep all filters</span>
        <Toggle />
      </div>
      <div className="mx-[5px] mt-[15px] flex h-[32px] items-center border border-dashed border-[#777] bg-black pl-[10px] text-[14.5px] tracking-[-0.2px] whitespace-nowrap">Add drill-through fields here</div>
    </div>
  );
}

function Toggle() {
  return (
    <div className="flex h-[20px] w-[40px] items-center justify-between rounded-full bg-[#2bae94] pr-[6px] pl-[6px] text-[11.5px] text-[#14453c]">
      <span>On</span>
      <span className="h-[10px] w-[10px] rounded-full bg-[#1f2b2b]" />
    </div>
  );
}

function TableGlyph() {
  return (
    <svg width="16" height="16" viewBox="0 0 16 16" fill="none" stroke="#c8c8c8" strokeWidth={1.100}><rect x="1" y="1" width="14" height="14" rx="2" /><path d="M1 5.500h14M1 10.500h14M5.500 1v14M10.500 1v14" /></svg>
  );
}

function FieldIcon({ kind }: { kind?: "sum" | "calc" | "date" }) {
  if (kind === "sum") return <svg width="15" height="16" viewBox="0 0 15 16" fill="none" stroke="#d0d0d0" strokeWidth={1.100}><path d="M14 2H2l6 6-6 6h12" /></svg>;
  if (kind === "calc") return <svg width="16" height="18" viewBox="0 0 16 18" fill="none" stroke="#d0d0d0" strokeWidth={1.100}><rect x="1" y="1" width="14" height="16" rx="2.500" /><rect x="4" y="3.500" width="8" height="3" /><path d="M4 10h1.500M7.500 10H9M11 10h1.500M4 13.500h1.500M7.500 13.500H9M11 13.500h1.500" strokeWidth={1.500} /></svg>;
  if (kind === "date") return <svg width="16" height="16" viewBox="0 0 16 16" fill="none" stroke="#d0d0d0" strokeWidth={1.100}><rect x="1" y="1.500" width="14" height="13.500" rx="2" /><path d="M1 5h14M6 9h1M9 9h1M12 9h1M6 12h1M9 12h1" /></svg>;
  return null;
}

function DataPane() {
  return (
    <div className="flex flex-1 flex-col bg-[#141414] text-white">
      <div className="mt-[12px] flex h-[26px] items-center justify-between pr-[10px] pl-[10px] text-[19px] font-semibold">
        <span>Data</span>
        <ChevronsRight size={16} strokeWidth={2.500} />
      </div>
      <div className="mt-[19px] ml-[6px] flex h-[30px] w-[214px] items-center rounded-[4px] border border-[#666] bg-[#202020] pl-[13px] text-[16px] text-[#8a8a8a]">
        <Search size={18} color="#aaaaaa" strokeWidth={1.300} />
        <span className="ml-[11px]">Search</span>
      </div>
      <div className="mt-[11px] flex flex-col text-[14px] text-[#eeeeee]">
        {FIELDS.map((f) =>
          f.type === "table" ? (
            <div key={f.name} className="flex h-[30px] items-center pl-[17px]">
              <ChevronDown size={14} color="#c8c8c8" />
              <span className="ml-[5px]"><TableGlyph /></span>
              <span className="ml-[7px]">{f.name}</span>
            </div>
          ) : (
            <div key={f.name} className="flex h-[30px] items-center pl-[37px]">
              <div className="flex w-[18px] justify-start">{f.expand && <ChevronRight size={14} color="#c8c8c8" />}</div>
              <div className="h-[15px] w-[15px] rounded-[3px] border border-[#8a8a8a]" />
              <div className="ml-[10px] flex w-[16px] justify-center"><FieldIcon kind={f.icon} /></div>
              <span className="ml-[7px] whitespace-nowrap">{f.name}</span>
            </div>
          ),
        )}
      </div>
    </div>
  );
}

function StatusBar() {
  return (
    <div className="relative h-[14px] overflow-hidden border-t border-[#5a5a5a] bg-[#141414] pt-[7px] pl-[5px] text-[13px] text-[#cccccc]">
      <span>Page 1 of 1</span>
      <div className="absolute top-[7px] left-[1713px] h-[10px] w-[5px] bg-[#dddddd]" />
      <div className="absolute top-[10px] left-[1729px] h-[6px] w-px bg-[#cccccc]" />
      <div className="absolute top-[9px] left-[1803px] h-[6px] w-px bg-[#cccccc]" />
      <span className="absolute top-[6px] left-[1826px]">80%</span>
      <div className="absolute top-[9px] left-[1879px] h-[10px] w-[17px] rounded-[2px] border border-[#cccccc]" />
    </div>
  );
}

export default function App() {
  return (
    <div className="flex h-[1004px] w-[1920px] flex-col overflow-hidden bg-[#141414] font-['Open_Sans',sans-serif]">
      <TitleBar />
      <TabsRow />
      <Ribbon />
      <div className="flex h-[777px]">
        <Rail />
        <div className="flex w-[1417px] shrink-0 flex-col">
          <div className="flex h-[733px]">
            <Canvas />
            <FilterPane />
          </div>
          <PageBar />
        </div>
        <VizPane />
        <DataPane />
      </div>
      <StatusBar />
    </div>
  );
}
